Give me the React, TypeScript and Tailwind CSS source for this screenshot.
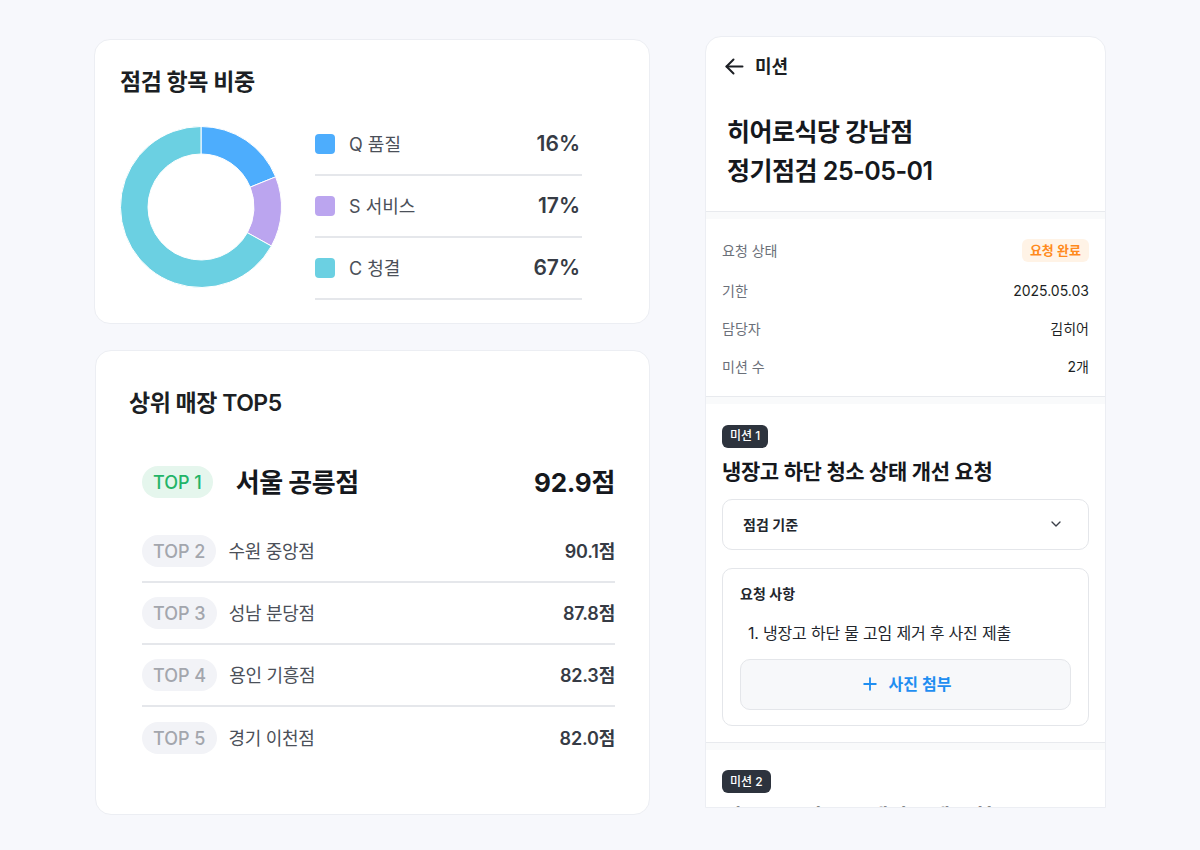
import { ChevronDown, Plus } from "lucide-react";

const FONT = { fontFamily: "Inter, 'Noto Sans CJK KR', 'Noto Sans', sans-serif" };

type Slice = { from: number; to: number; color: string };

// donut slices in degrees, clockwise from 12 o'clock
const slices: Slice[] = [
  { from: 0, to: 68, color: "#4dadfd" },
  { from: 68, to: 119, color: "#bba5ef" },
  { from: 119, to: 360, color: "#6bd0e2" },
];

const legend = [
  { code: "Q", name: "품질", pct: "16%", color: "#4dadfd" },
  { code: "S", name: "서비스", pct: "17%", color: "#bba5ef" },
  { code: "C", name: "청결", pct: "67%", color: "#6bd0e2" },
];

const ranks = [
  { rank: 2, name: "수원 중앙점", score: "90.1점" },
  { rank: 3, name: "성남 분당점", score: "87.8점" },
  { rank: 4, name: "용인 기흥점", score: "82.3점" },
  { rank: 5, name: "경기 이천점", score: "82.0점" },
];

const info = [
  { label: "기한", value: "2025.05.03" },
  { label: "담당자", value: "김히어" },
  { label: "미션 수", value: "2개" },
];

function point(cx: number, cy: number, r: number, deg: number) {
  const a = ((deg - 90) * Math.PI) / 180;
  return [cx + r * Math.cos(a), cy + r * Math.sin(a)];
}

function arcPath(s: Slice, R: number, r: number, c: number) {
  const large = s.to - s.from > 180 ? 1 : 0;
  const [x1, y1] = point(c, c, R, s.from);
  const [x2, y2] = point(c, c, R, s.to);
  const [x3, y3] = point(c, c, r, s.to);
  const [x4, y4] = point(c, c, r, s.from);
  return `M${x1} ${y1} A${R} ${R} 0 ${large} 1 ${x2} ${y2} L${x3} ${y3} A${r} ${r} 0 ${large} 0 ${x4} ${y4} Z`;
}

function Donut() {
  return (
    <svg width="162" height="162" viewBox="0 0 162 162" className="shrink-0">
      {slices.map((s) => (
        <path key={s.from} d={arcPath(s, 80.5, 53, 81)} fill={s.color} stroke="#fff" strokeWidth="1" />
      ))}
    </svg>
  );
}

function BackArrow() {
  return (
    <svg width="19" height="17" viewBox="0 0 19 17" fill="none" stroke="#1c1f24" strokeWidth="2" strokeLinecap="round" strokeLinejoin="round">
      <path d="M17.5 8.5H1.5" />
      <path d="M8.5 1.5 1.5 8.5l7 7" />
    </svg>
  );
}

function Separator() {
  return <div className="border-t border-[#e8eaee] bg-[#f9fafb] h-[8px]" />;
}

function MissionChip({ n }: { n: number }) {
  return (
    <span className="inline-flex items-center h-[23px] px-[8px] rounded-[6px] bg-[#2d333d] text-white text-[12px] font-medium">
      미션 {n}
    </span>
  );
}

export default function App() {
  return (
    <div className="min-h-screen bg-[#f7f8fc] flex gap-[55px] pl-[94px] pt-[36px]" style={FONT}>
      {/* left column */}
      <div className="w-[556px] mt-[3px] flex flex-col gap-[26px]">
        <section className="h-[285px] bg-white rounded-[16px] border border-[#eceef3] pl-[25px] pt-[27px]">
          <h2 className="text-[23px] leading-[30px] font-semibold text-[#1c1f24] tracking-[-0.5px]">점검 항목 비중</h2>
          <div className="flex items-center mt-[17px]">
            <Donut />
            <div className="ml-[33px] w-[267px]">
              {legend.map((l) => (
                <div key={l.code} className="h-[62px] flex items-center border-b-2 border-[#e5e7eb]">
                  <span className="w-[20px] h-[20px] rounded-[4px]" style={{ background: l.color }} />
                  <span className="ml-[14px] text-[18px] text-[#4b5059]">
                    {l.code} {l.name}
                  </span>
                  <span className="ml-auto mr-[2px] text-[21px] font-semibold text-[#363b45]">{l.pct}</span>
                </div>
              ))}
            </div>
          </div>
        </section>

        <section className="h-[465px] bg-white rounded-[16px] border border-[#eceef3] pl-[33px] pr-[34px] pt-[37px] ml-[1px]">
          <h2 className="text-[23px] leading-[30px] font-semibold text-[#1c1f24] tracking-[-0.5px]">상위 매장 TOP5</h2>
          <div className="pl-[13px] mt-[34px]">
            <div className="h-[60px] flex items-center mb-[9px]">
              <span className="h-[32px] px-[11px] rounded-full bg-[#e5f6ed] text-[#23b468] text-[18px] font-medium flex items-center">
                TOP 1
              </span>
              <span className="ml-[23px] text-[26px] font-bold text-[#15181d] tracking-[-0.5px]">서울 공릉점</span>
              <span className="ml-auto text-[26px] font-bold text-[#15181d] tracking-[-0.3px]">92.9점</span>
            </div>
            {ranks.map((r, i) => (
              <div
                key={r.rank}
                className={`h-[62px] flex items-center ${i < ranks.length - 1 ? "border-b-2 border-[#e5e7eb]" : ""}`}
              >
                <span className="h-[32px] px-[11px] rounded-full bg-[#f2f3f7] text-[#a3a6ad] text-[18px] font-medium flex items-center">
                  TOP {r.rank}
                </span>
                <span className="ml-[12px] text-[18px] text-[#4b5059] tracking-[-0.3px]">{r.name}</span>
                <span className="ml-auto text-[18px] font-semibold text-[#363b45] tracking-[-0.2px]">{r.score}</span>
              </div>
            ))}
          </div>
        </section>
      </div>

      {/* mission detail panel */}
      <div className="w-[401px] h-[772px] bg-white rounded-t-[16px] border border-[#eceef3] overflow-hidden">
        <div className="flex items-center h-[26px] mt-[16px] pl-[19px]">
          <BackArrow />
          <span className="ml-[11px] text-[18px] font-semibold text-[#1c1f24]">미션</span>
        </div>
        <h1 className="mt-[34px] pl-[21px] text-[25px] leading-[39px] font-semibold text-[#15181d] tracking-[-0.5px]">
          히어로식당 강남점
          <br />
          정기점검 25-05-01
        </h1>
        <div className="h-[20px]" />
        <Separator />

        <div className="px-[16px] pt-[11px] pb-[11px]">
          <div className="h-[41px] flex items-center justify-between">
            <span className="text-[14px] text-[#6b7079]">요청 상태</span>
            <span className="h-[23px] px-[8px] rounded-[6px] bg-[#fff3e6] text-[#ff8a1c] text-[13px] font-semibold flex items-center">
              요청 완료
            </span>
          </div>
          {info.map((row) => (
            <div key={row.label} className="h-[38px] flex items-center justify-between">
              <span className="text-[14px] text-[#6b7079]">{row.label}</span>
              <span className="text-[14px] text-[#1c1f24]">{row.value}</span>
            </div>
          ))}
        </div>
        <Separator />

        <div className="px-[16px] pt-[18px] pb-[16px]">
          <MissionChip n={1} />
          <h3 className="mt-[10px] text-[21px] leading-[28px] font-semibold text-[#15181d] tracking-[-0.4px]">
            냉장고 하단 청소 상태 개선 요청
          </h3>
          <div className="mt-[13px] h-[51px] rounded-[10px] border border-[#e4e6ea] flex items-center justify-between pl-[20px] pr-[24px]">
            <span className="text-[14px] font-semibold text-[#22262d]">점검 기준</span>
            <ChevronDown size={16} strokeWidth={2} className="text-[#3a3f48]" />
          </div>
          <div className="mt-[18px] rounded-[10px] border border-[#e4e6ea] px-[17px] pt-[16px] pb-[15px]">
            <p className="text-[14px] leading-[18px] font-semibold text-[#22262d]">요청 사항</p>
            <p className="mt-[20px] pl-[8px] text-[16px] leading-[21px] text-[#22262d] tracking-[-0.2px]">1. 냉장고 하단 물 고임 제거 후 사진 제출</p>
            <button className="mt-[15px] w-full h-[51px] rounded-[10px] border border-[#e4e6ea] bg-[#f7f8fa] flex items-center justify-center gap-[9px] text-[#1f8ef1]">
              <Plus size={20} strokeWidth={2.2} />
              <span className="text-[16px] font-semibold">사진 첨부</span>
            </button>
          </div>
        </div>
        <Separator />

        <div className="px-[16px] pt-[18px]">
          <MissionChip n={2} />
          <h3 className="mt-[10px] text-[21px] leading-[28px] font-semibold text-[#15181d] tracking-[-0.4px]">
            냉동고 도어 고무 패킹 교체 요청
          </h3>
        </div>
      </div>
    </div>
  );
}
